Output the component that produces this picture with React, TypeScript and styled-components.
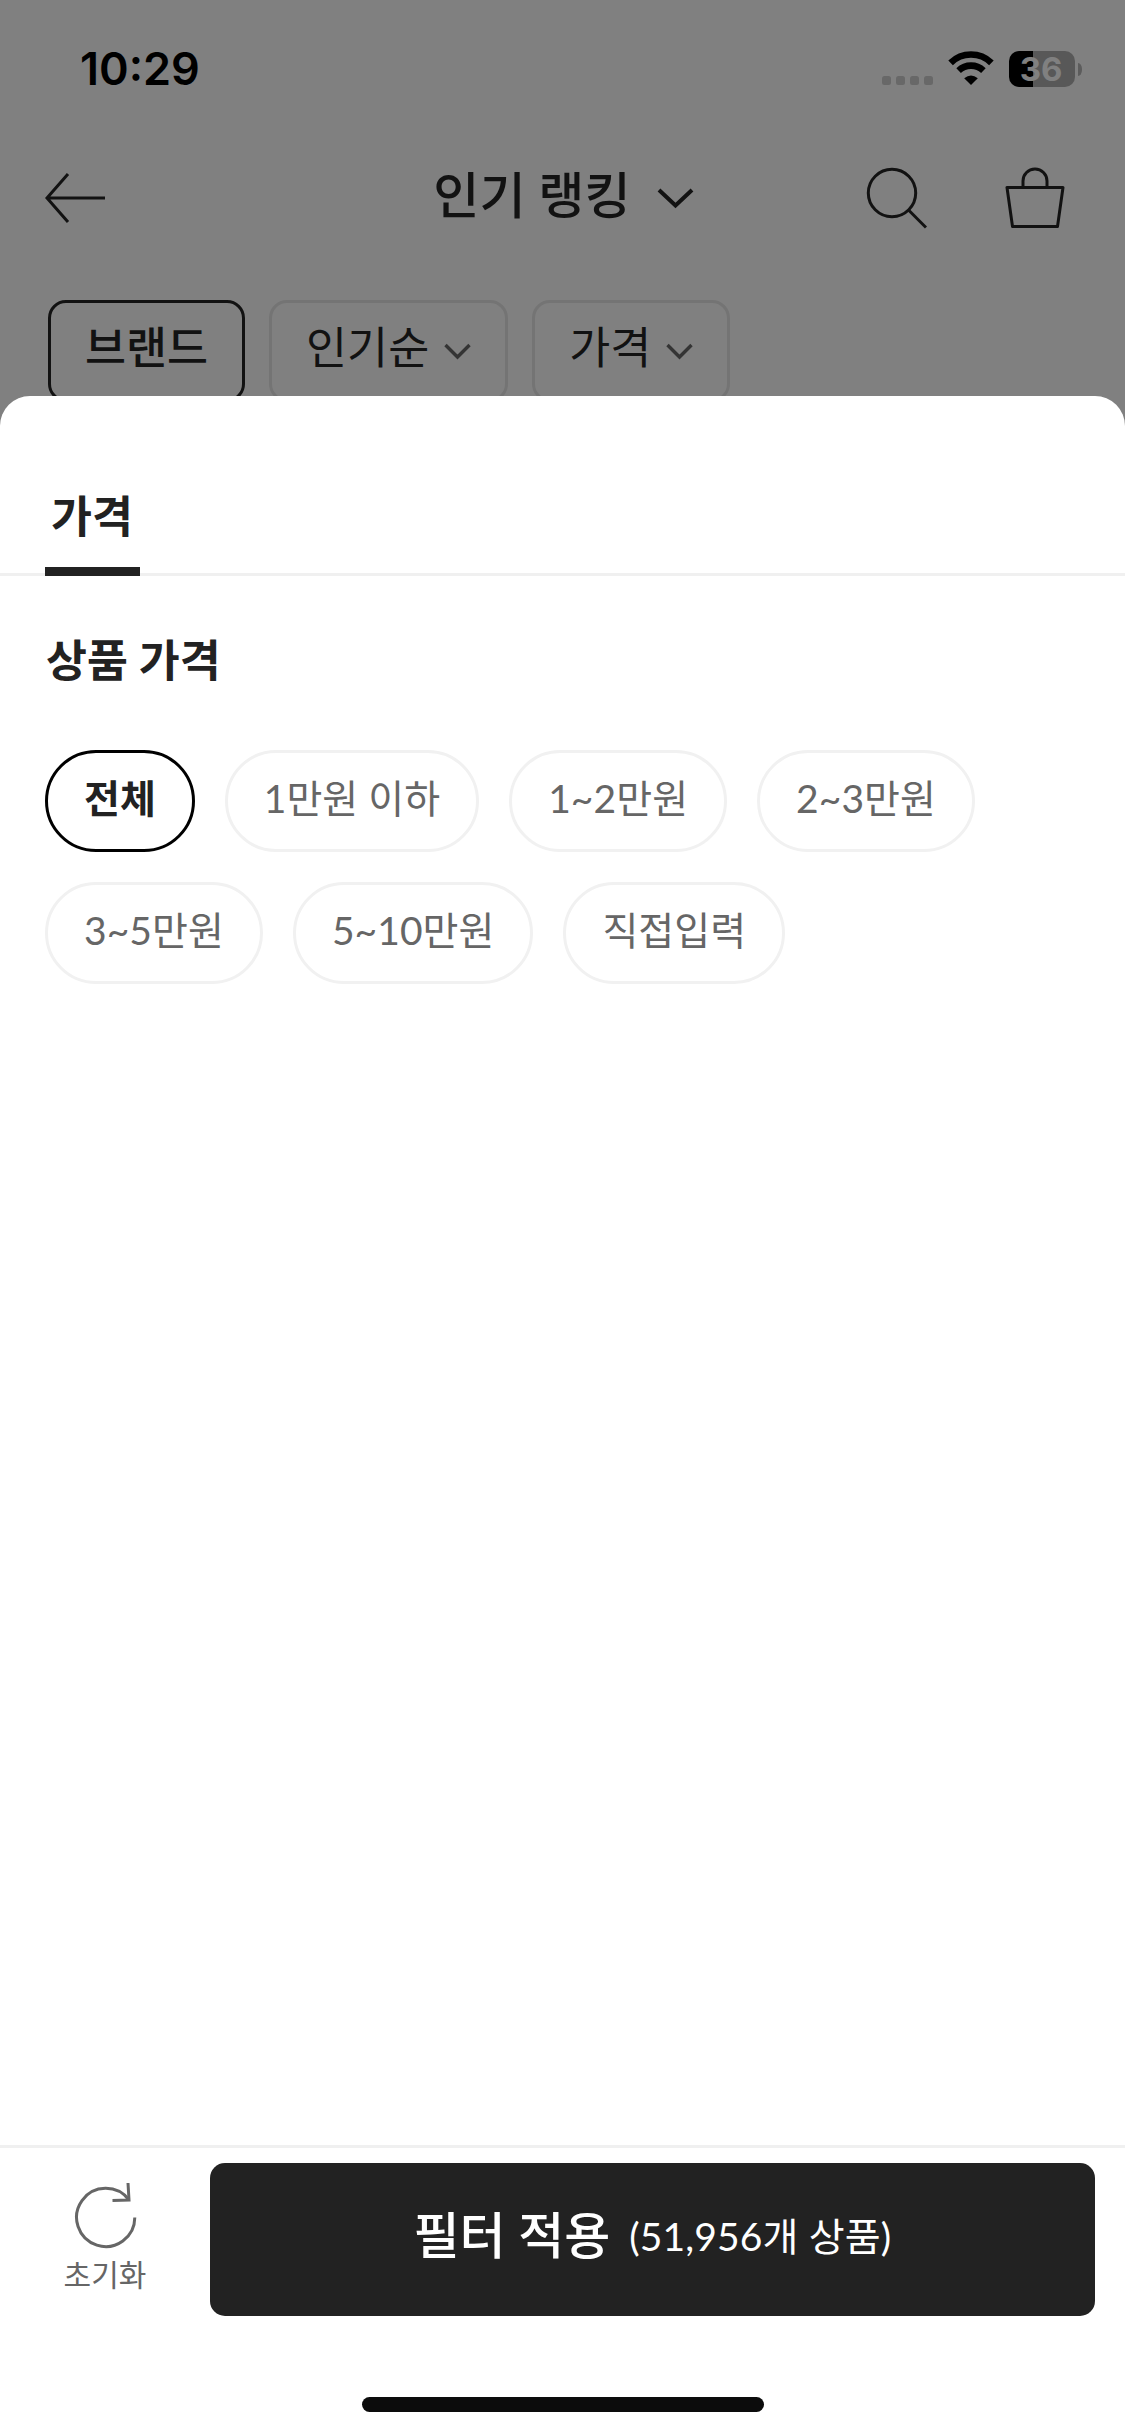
import React from "react";
import styled, { createGlobalStyle, css } from "styled-components";

const GlobalStyle = createGlobalStyle`
  *, *::before, *::after { box-sizing: border-box; }
  html, body { margin: 0; padding: 0; background: #808080; }
  button { font: inherit; color: inherit; background: none; border: 0; margin: 0; padding: 0; }
  svg { display: block; flex: none; }
`;

const Screen = styled.div`
  width: 1125px;
  height: 2436px;
  display: flex;
  flex-direction: column;
  overflow: hidden;
  background: #808080;
  color: #222;
  font-family: Lato, "Noto Sans CJK KR", sans-serif;
`;

const Backdrop = styled.div`
  height: 396px;
  flex: none;
  overflow: hidden;
  color: #121212;
`;

const StatusBar = styled.div`
  height: 138px;
  padding: 0 43px 0 80px;
  display: flex;
  justify-content: space-between;
`;

const Clock = styled.span`
  padding-top: 42px;
  font: 600 45px/54px Inter, sans-serif;
  letter-spacing: 0;
  color: #000;
`;

const StatusIcons = styled.div`
  height: 36px;
  margin-top: 51px;
  display: flex;
`;

const SignalDots = styled.div`
  display: flex;
  gap: 5px;
  margin: 25px 15px 0 0;
`;

const Dot = styled.i`
  width: 9px;
  height: 9px;
  border-radius: 2.5px;
  background: #686868;
`;

const Battery = styled.div`
  width: 66px;
  height: 36px;
  margin-left: 15px;
  padding-right: 2px;
  display: flex;
  align-items: center;
  justify-content: center;
  border-radius: 10px;
  background: linear-gradient(90deg, #000 24px, #585858 24px);
  color: #808080;
  font: 700 33px/36px Inter, sans-serif;
`;

const BatteryTip = styled.i`
  width: 4px;
  height: 13px;
  margin: 12px 0 0 3px;
  border-radius: 0 4px 4px 0 / 0 6px 6px 0;
  background: #5c5c5c;
`;

const NavBar = styled.header`
  height: 120px;
  padding: 0 60px 0 45px;
  display: grid;
  grid-template-columns: 200px 1fr 200px;
  align-items: center;
`;

const NavTitle = styled.h1`
  margin: 0;
  padding-left: 17px;
  display: flex;
  align-items: center;
  justify-content: center;
  gap: 26px;
  font-size: 50.2px;
  line-height: 60px;
  font-weight: 500;
`;

const NavTitleText = styled.span`
  padding-bottom: 7px;
`;

const NavActions = styled.div`
  display: flex;
  justify-content: flex-end;
  gap: 78px;
`;

const QuickFilters = styled.div`
  margin-top: 42px;
  padding-left: 48px;
  display: flex;
  gap: 24px;
`;

const QuickFilter = styled.button<{ $active?: boolean }>`
  height: 102px;
  padding: 0 34px;
  display: flex;
  align-items: center;
  gap: 15px;
  border: 3px solid ${(p) => (p.$active ? "#121212" : "#747474")};
  border-radius: 18px;
  font-size: 44.6px;
  line-height: 60px;
  font-weight: ${(p) => (p.$active ? 500 : 400)};
`;

const QuickFilterLabel = styled.span`
  padding-bottom: 8px;
`;

const Sheet = styled.section`
  flex: 1;
  display: flex;
  flex-direction: column;
  background: #fff;
  border-radius: 30px 30px 0 0;
`;

const TabBar = styled.nav`
  height: 180px;
  padding: 0 45px;
  display: flex;
  align-items: flex-end;
  background: linear-gradient(#f0f0f0, #f0f0f0) bottom / 100% 3px no-repeat;
`;

const Tab = styled.button`
  width: 95px;
  height: 102px;
  padding: 9px 6px 0;
  border-bottom: 9px solid #222;
  font-size: 44.5px;
  line-height: 66px;
  font-weight: 700;
  white-space: nowrap;
  display: flex;
`;

const Content = styled.div`
  flex: 1;
  padding: 51px 45px 0;
`;

const SectionTitle = styled.h2`
  margin: 0 0 57px 1px;
  font-size: 44.5px;
  line-height: 66px;
  font-weight: 700;
`;

const Chips = styled.div`
  display: flex;
  flex-wrap: wrap;
  gap: 30px;
`;

const Chip = styled.button<{ $active?: boolean }>`
  height: 102px;
  padding: 0 36px 11px;
  border: 3px solid #f1f1f1;
  border-radius: 51px;
  font-size: 39px;
  letter-spacing: 0.05px;
  color: #666;
  ${(p) =>
    p.$active &&
    css`
      border-color: #000;
      color: #222;
      font-weight: 700;
      letter-spacing: 0;
    `}
`;

const Footer = styled.footer`
  height: 291px;
  border-top: 3px solid #f0f0f0;
  display: flex;
  flex-direction: column;
  align-items: center;
`;

const FooterActions = styled.div`
  width: 100%;
  height: 168px;
  padding: 15px 30px 0 0;
  display: flex;
`;

const ResetButton = styled.button`
  width: 210px;
  padding-top: 19px;
  display: flex;
  flex-direction: column;
  align-items: center;
  gap: 3px;
  color: #666;
  font-size: 30px;
  line-height: 42px;
`;

const ApplyButton = styled.button`
  flex: 1;
  border-radius: 15px;
  background: #222;
  color: #fff;
  font-size: 50px;
  line-height: 144px;
  padding-bottom: 10px;
  font-weight: 500;
  text-align: center;
`;

const ResultCount = styled.span`
  margin-left: 19px;
  font-size: 39px;
  line-height: 1;
  font-weight: 400;
  letter-spacing: 0.15px;
  vertical-align: 3px;
`;

const HomeIndicator = styled.div`
  width: 402px;
  height: 15px;
  margin-top: 81px;
  border-radius: 8px;
  background: #0c0c0c;
`;

const WifiIcon = () => (
  <svg width="46" height="34" viewBox="0 0 46 34" fill="none" stroke="#000" strokeWidth="6.6">
    <path d="M2.6 11.8A29.3 29.3 0 0 1 43.4 11.8" />
    <path d="M10.6 19.6A18 18 0 0 1 35.4 19.6" />
    <path d="M23 34L16.2 27.3Q23 21.8 29.8 27.3Z" fill="#000" stroke="none" />
  </svg>
);

const BackIcon = () => (
  <svg width="60" height="50" viewBox="0 0 60 50" fill="none" stroke="currentColor" strokeWidth="3">
    <path d="M23 1L2 25L23 49M2 25H60" />
  </svg>
);

const SearchIcon = () => (
  <svg width="61" height="62" viewBox="0 0 61 62" fill="none" stroke="currentColor" strokeWidth="3">
    <circle cx="26" cy="26" r="23.7" />
    <path d="M42.5 43L60 60.5" />
  </svg>
);

const BagIcon = () => (
  <svg width="60" height="62" viewBox="0 0 60 62" fill="none" stroke="currentColor" strokeWidth="3">
    <path d="M2 20.5H58L52.5 59.5H7.5Z" strokeLinejoin="round" />
    <path d="M18 20V14A12 12 0 0 1 42 14V20" />
  </svg>
);

const TitleChevron = () => (
  <svg width="37" height="22" viewBox="0 0 37 22" fill="none" stroke="currentColor" strokeWidth="4">
    <path d="M2 3L18.5 18.5L35 3" />
  </svg>
);

const SmallChevron = () => (
  <svg width="27" height="18" viewBox="0 0 27 18" fill="none" stroke="#343434" strokeWidth="3.4">
    <path d="M1.5 3L13.5 15L25.5 3" />
  </svg>
);

const ResetIcon = () => (
  <svg width="65" height="68" viewBox="0 0 65 68" fill="none" stroke="currentColor" strokeWidth="3">
    <path d="M61.8 35.5A29.1 29.1 0 1 1 56 18" />
    <path d="M55 1L56 18L39.5 18.5" />
  </svg>
);

const PRICE_OPTIONS = ["전체", "1만원 이하", "1~2만원", "2~3만원", "3~5만원", "5~10만원", "직접입력"];

export default function App() {
  return (
    <>
      <GlobalStyle />
      <Screen>
        <Backdrop>
          <StatusBar>
            <Clock>10:29</Clock>
            <StatusIcons>
              <SignalDots>
                <Dot /><Dot /><Dot /><Dot />
              </SignalDots>
              <WifiIcon />
              <Battery>36</Battery>
              <BatteryTip />
            </StatusIcons>
          </StatusBar>
          <NavBar>
            <BackIcon />
            <NavTitle>
              <NavTitleText>인기 랭킹</NavTitleText>
              <TitleChevron />
            </NavTitle>
            <NavActions>
              <SearchIcon />
              <BagIcon />
            </NavActions>
          </NavBar>
          <QuickFilters>
            <QuickFilter $active>
              <QuickFilterLabel>브랜드</QuickFilterLabel>
            </QuickFilter>
            <QuickFilter>
              <QuickFilterLabel>인기순</QuickFilterLabel>
              <SmallChevron />
            </QuickFilter>
            <QuickFilter>
              <QuickFilterLabel>가격</QuickFilterLabel>
              <SmallChevron />
            </QuickFilter>
          </QuickFilters>
        </Backdrop>
        <Sheet>
          <TabBar>
            <Tab>가격</Tab>
          </TabBar>
          <Content>
            <SectionTitle>상품 가격</SectionTitle>
            <Chips>
              {PRICE_OPTIONS.map((label, i) => (
                <Chip key={label} $active={i === 0}>{label}</Chip>
              ))}
            </Chips>
          </Content>
          <Footer>
            <FooterActions>
              <ResetButton>
                <ResetIcon />
                초기화
              </ResetButton>
              <ApplyButton>
                필터 적용
                <ResultCount>(51,956개 상품)</ResultCount>
              </ApplyButton>
            </FooterActions>
            <HomeIndicator />
          </Footer>
        </Sheet>
      </Screen>
    </>
  );
}
